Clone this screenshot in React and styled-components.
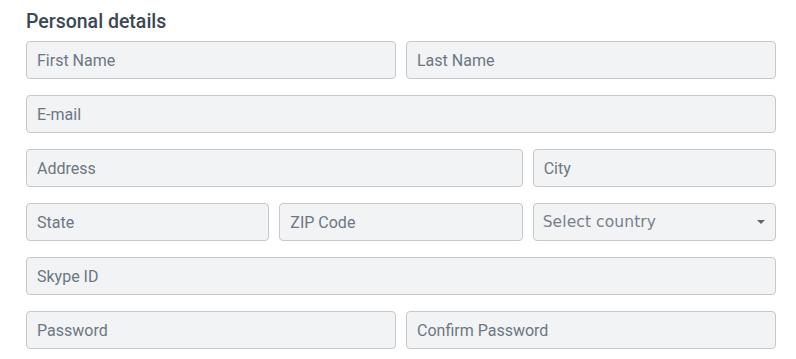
import React from 'react';
import styled, { createGlobalStyle } from 'styled-components';

const GlobalStyle = createGlobalStyle`
  body {
    margin: 0;
    background: #ffffff;
    font-family: Roboto, 'Liberation Sans', sans-serif;
  }
`;

const Section = styled.section`
  padding: 10px 20px 0 26px;
  width: 750px;
`;

const Title = styled.h3`
  margin: 0 0 7px;
  font-size: 19.5px;
  font-weight: 500;
  line-height: 24px;
  color: #3a4856;
`;

const Grid = styled.div`
  display: grid;
  grid-template-columns: repeat(${(p) => p.cols}, 1fr);
  column-gap: 10px;
  row-gap: 16px;
  margin-bottom: 16px;
`;

const Form = styled.div`
  display: flex;
  flex-direction: column;
`;

const Input = styled.input`
  box-sizing: border-box;
  grid-column: span ${(p) => p.span || 1};
  height: 38px;
  width: 100%;
  padding: 0 10px;
  border: 1px solid #c6c8ca;
  border-radius: 4px;
  background: #f2f3f5;
  font-family: Roboto, 'Liberation Sans', sans-serif;
  font-size: 16px;
  color: #333;
  outline: none;

  &::placeholder {
    color: #6b7782;
  }
`;

const SelectBox = styled.div`
  position: relative;
  box-sizing: border-box;
  height: 38px;
  display: flex;
  align-items: center;
  padding: 0 9px;
  border: 1px solid #c6c8ca;
  border-radius: 4px;
  background: #f2f3f5;
  font-family: 'DejaVu Sans', 'Open Sans', sans-serif;
  font-size: 15.5px;
  color: #76808a;
  letter-spacing: 0.1px;
`;

const Caret = styled.span`
  position: absolute;
  right: 10px;
  top: 16px;
  width: 0;
  height: 0;
  border-left: 4px solid transparent;
  border-right: 4px solid transparent;
  border-top: 4px solid #5d6770;
`;

function App() {
  return (
    <>
      <GlobalStyle />
      <Section>
        <Title>Personal details</Title>
        <Form>
          <Grid cols={2}>
            <Input placeholder='First Name' />
            <Input placeholder='Last Name' />
          </Grid>
          <Grid cols={1}>
            <Input placeholder='E-mail' />
          </Grid>
          <Grid cols={3}>
            <Input span={2} placeholder='Address' />
            <Input placeholder='City' />
          </Grid>
          <Grid cols={3}>
            <Input placeholder='State' />
            <Input placeholder='ZIP Code' />
            <SelectBox>
              Select country
              <Caret />
            </SelectBox>
          </Grid>
          <Grid cols={1}>
            <Input placeholder='Skype ID' />
          </Grid>
          <Grid cols={2}>
            <Input type='password' placeholder='Password' />
            <Input type='password' placeholder='Confirm Password' />
          </Grid>
        </Form>
      </Section>
    </>
  );
}

export default App;
